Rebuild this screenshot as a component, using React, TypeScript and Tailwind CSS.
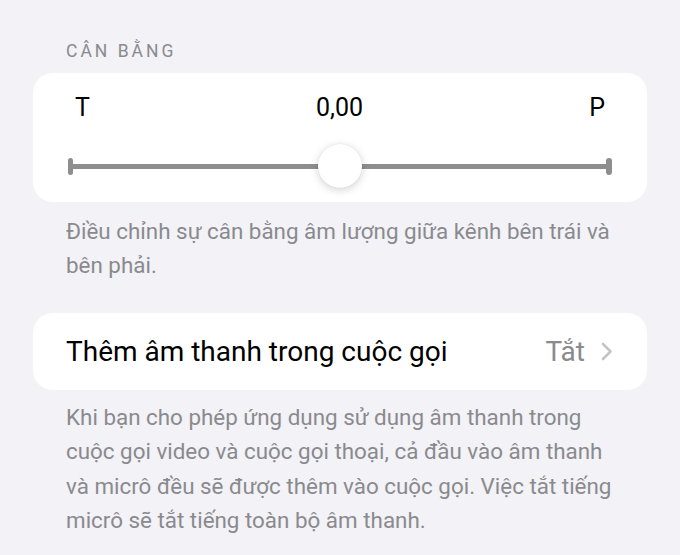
export default function App() {
  return (
    <div className="w-[680px] h-[555px] overflow-hidden bg-[#f2f2f7] font-['Roboto','Noto_Sans',sans-serif] antialiased">
      <div className="px-[66px] pt-[40px] text-[17.5px] leading-[22px] tracking-[3px] text-[#8a8a8e]">CÂN BẰNG</div>

      <div className="mx-[33px] mt-[11px] h-[129px] rounded-[20px] bg-white px-[35px] pt-[20px]">
        <div className="flex items-center justify-between px-[7px] text-[25px] leading-[30px] text-black">
          <span>T</span>
          <span>0,00</span>
          <span>P</span>
        </div>
        <div className="relative mt-[21px] flex h-[44px] items-center">
          <div className="h-[17px] w-[5px] rounded-full bg-[#8e8e90]" />
          <div className="h-[5px] flex-1 bg-[#8e8e90]" />
          <div className="h-[17px] w-[6px] rounded-full bg-[#8e8e90]" />
          <div className="absolute left-1/2 top-0 h-[44px] w-[44px] -translate-x-1/2 rounded-full bg-white shadow-[0_2px_8px_rgba(0,0,0,0.18),0_0_1px_rgba(0,0,0,0.12)]" />
        </div>
      </div>

      <p className="whitespace-nowrap pl-[66px] pt-[12px] text-[22.4px] leading-[34px] text-[#8a8a8e]">
        Điều chỉnh sự cân bằng âm lượng giữa kênh bên trái và
        <br />
        bên phải.
      </p>

      <div className="mx-[33px] mt-[31px] flex h-[77px] items-center justify-between rounded-[20px] bg-white pl-[33px] pr-[34px]">
        <span className="text-[28px] text-black">Thêm âm thanh trong cuộc gọi</span>
        <div className="flex items-center gap-[16px]">
          <span className="text-[28px] text-[#8a8a8e]">Tắt</span>
          <svg width="12" height="19" viewBox="0 0 12 19" fill="none">
            <path d="M2 2l7.5 7.5L2 17" stroke="#c4c4c7" strokeWidth="2.6" strokeLinecap="round" strokeLinejoin="round" />
          </svg>
        </div>
      </div>

      <p className="whitespace-nowrap pl-[66px] pt-[10px] text-[22.4px] leading-[34.4px] text-[#8a8a8e]">
        Khi bạn cho phép ứng dụng sử dụng âm thanh trong
        <br />
        cuộc gọi video và cuộc gọi thoại, cả đầu vào âm thanh
        <br />
        và micrô đều sẽ được thêm vào cuộc gọi. Việc tắt tiếng
        <br />
        micrô sẽ tắt tiếng toàn bộ âm thanh.
      </p>
    </div>
  );
}
